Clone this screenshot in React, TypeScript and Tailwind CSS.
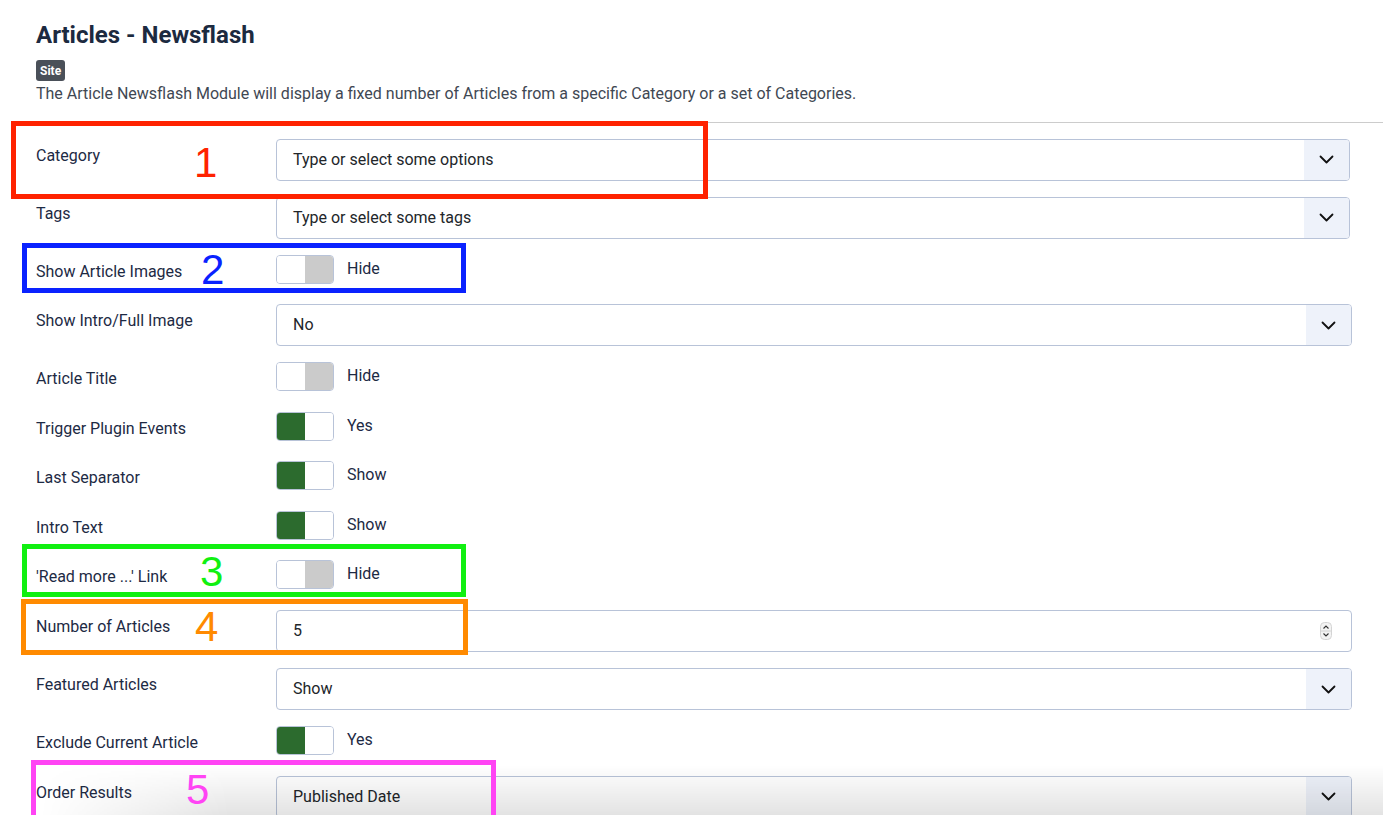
import { ReactNode } from "react";

type Field =
  | { label: string; kind: "select"; value: string; narrow?: boolean }
  | { label: string; kind: "toggle"; on: boolean; text: string }
  | { label: string; kind: "number"; value: string };

const fields: Field[] = [
  { label: "Category", kind: "select", value: "Type or select some options", narrow: true },
  { label: "Tags", kind: "select", value: "Type or select some tags", narrow: true },
  { label: "Show Article Images", kind: "toggle", on: false, text: "Hide" },
  { label: "Show Intro/Full Image", kind: "select", value: "No" },
  { label: "Article Title", kind: "toggle", on: false, text: "Hide" },
  { label: "Trigger Plugin Events", kind: "toggle", on: true, text: "Yes" },
  { label: "Last Separator", kind: "toggle", on: true, text: "Show" },
  { label: "Intro Text", kind: "toggle", on: true, text: "Show" },
  { label: "'Read more ...' Link", kind: "toggle", on: false, text: "Hide" },
  { label: "Number of Articles", kind: "number", value: "5" },
  { label: "Featured Articles", kind: "select", value: "Show" },
  { label: "Exclude Current Article", kind: "toggle", on: true, text: "Yes" },
  { label: "Order Results", kind: "select", value: "Published Date" },
];

// numbered callouts drawn on top of the form
const callouts = [
  { n: "1", box: "left-[11px] top-[121px] w-[697px] h-[78px] border-[#ff2200]", num: "left-[194px] top-[142px] text-[#ff2200]" },
  { n: "2", box: "left-[22px] top-[243px] w-[444px] h-[50px] border-[#0a22ff]", num: "left-[201px] top-[249px] text-[#0a22ff]" },
  { n: "3", box: "left-[22px] top-[544px] w-[444px] h-[53px] border-[#11f011]", num: "left-[200px] top-[551px] text-[#11f011]" },
  { n: "4", box: "left-[21px] top-[599px] w-[447px] h-[56px] border-[#ff8a00]", num: "left-[195px] top-[606px] text-[#ff8a00]" },
  { n: "5", box: "left-[31px] top-[760px] w-[465px] h-[80px] border-[#ff44f4]", num: "left-[186px] top-[769px] text-[#ff44f4]" },
];

const Chevron = () => (
  <svg width="15" height="9" viewBox="0 0 15 9" fill="none">
    <path d="M1.5 1.5l6 6 6-6" stroke="#111" strokeWidth="1.8" strokeLinecap="round" strokeLinejoin="round" />
  </svg>
);

const Spinner = () => (
  <svg width="12" height="18" viewBox="0 0 12 18" fill="none">
    <rect x="0.5" y="0.5" width="11" height="17" rx="4" fill="#f3f3f3" stroke="#d4d4d4" />
    <line x1="1" y1="9" x2="11" y2="9" stroke="#d4d4d4" />
    <path d="M3.5 6.5L6 4l2.5 2.5" stroke="#333" strokeWidth="1.1" />
    <path d="M3.5 11.5L6 14l2.5-2.5" stroke="#333" strokeWidth="1.1" />
  </svg>
);

const Box = ({ children, narrow }: { children: ReactNode; narrow?: boolean }) => (
  <div
    className={`h-[42px] flex items-stretch border border-[#b8c3d8] rounded-[4px] overflow-hidden bg-white ${
      narrow ? "mr-[2px]" : ""
    }`}
  >
    {children}
  </div>
);

const Toggle = ({ on, text }: { on: boolean; text: string }) => (
  <div className="h-[33.6px] flex items-start">
    <div className="w-[58px] h-[29px] flex border border-[#b8c3d8] rounded-[4px] overflow-hidden">
      <div className={`flex-1 ${on ? "bg-[#2c6b2e]" : "bg-white"}`} />
      <div className={`flex-1 ${on ? "bg-white" : "bg-[#cbcbcb]"}`} />
    </div>
    <span className="ml-[13px] leading-[28px] text-[16px] text-[#1d2a44]">{text}</span>
  </div>
);

const Control = ({ field }: { field: Field }) => {
  if (field.kind === "toggle") return <Toggle on={field.on} text={field.text} />;
  if (field.kind === "number")
    return (
      <Box>
        <span className="flex-1 pl-[16px] flex items-center text-[16px] text-[#22262a]">{field.value}</span>
        <span className="w-[45px] flex items-center justify-center pr-[6px]">
          <Spinner />
        </span>
      </Box>
    );
  return (
    <Box narrow={field.narrow}>
      <span className="flex-1 pl-[16px] flex items-center text-[16px] text-[#22262a]">{field.value}</span>
      <span className="w-[45px] bg-[#eef2fa] flex items-center justify-center">
        <Chevron />
      </span>
    </Box>
  );
};

export default function App() {
  return (
    <div className="relative w-full h-[815px] overflow-hidden bg-white font-['Roboto',sans-serif]">
      <div className="pl-[36px] pr-[31px] pt-[20px]">
        <h1 className="text-[24px] leading-[30px] font-bold text-[#1c2a40]">Articles - Newsflash</h1>
        <span className="mt-[10px] inline-flex items-center h-[21px] px-[4px] rounded-[3px] bg-[#4a5059] text-white text-[12px] font-bold">
          Site
        </span>
        <p className="mt-[1px] text-[16px] leading-[21px] text-[#3f4853]">
          The Article Newsflash Module will display a fixed number of Articles from a specific Category or a set of
          Categories.
        </p>
      </div>
      <div className="ml-[30px] mt-[18px] h-px bg-[#cccccc]" />

      <div className="pl-[36px] pr-[31px] pt-[16px] flex flex-col gap-[16px]">
        {fields.map((f) => (
          <div key={f.label} className="flex items-start">
            <label className="w-[240px] shrink-0 pt-[6px] text-[16px] leading-[22px] text-[#1d2a44]">{f.label}</label>
            <div className="flex-1">
              <Control field={f} />
            </div>
          </div>
        ))}
      </div>

      {/* soft shade along the bottom edge */}
      <div className="pointer-events-none absolute left-0 right-0 bottom-0 h-[50px] bg-[linear-gradient(to_bottom,rgba(0,0,0,0),rgba(0,0,0,0.11))] [mask-image:linear-gradient(to_right,transparent_40px,black_230px)]" />

      {callouts.map((c) => (
        <div key={c.n}>
          <div className={`pointer-events-none absolute border-[5px] ${c.box}`} />
          <span className={`absolute text-[42px] leading-none font-['Liberation_Sans',Arial,sans-serif] ${c.num}`}>
            {c.n}
          </span>
        </div>
      ))}
    </div>
  );
}
